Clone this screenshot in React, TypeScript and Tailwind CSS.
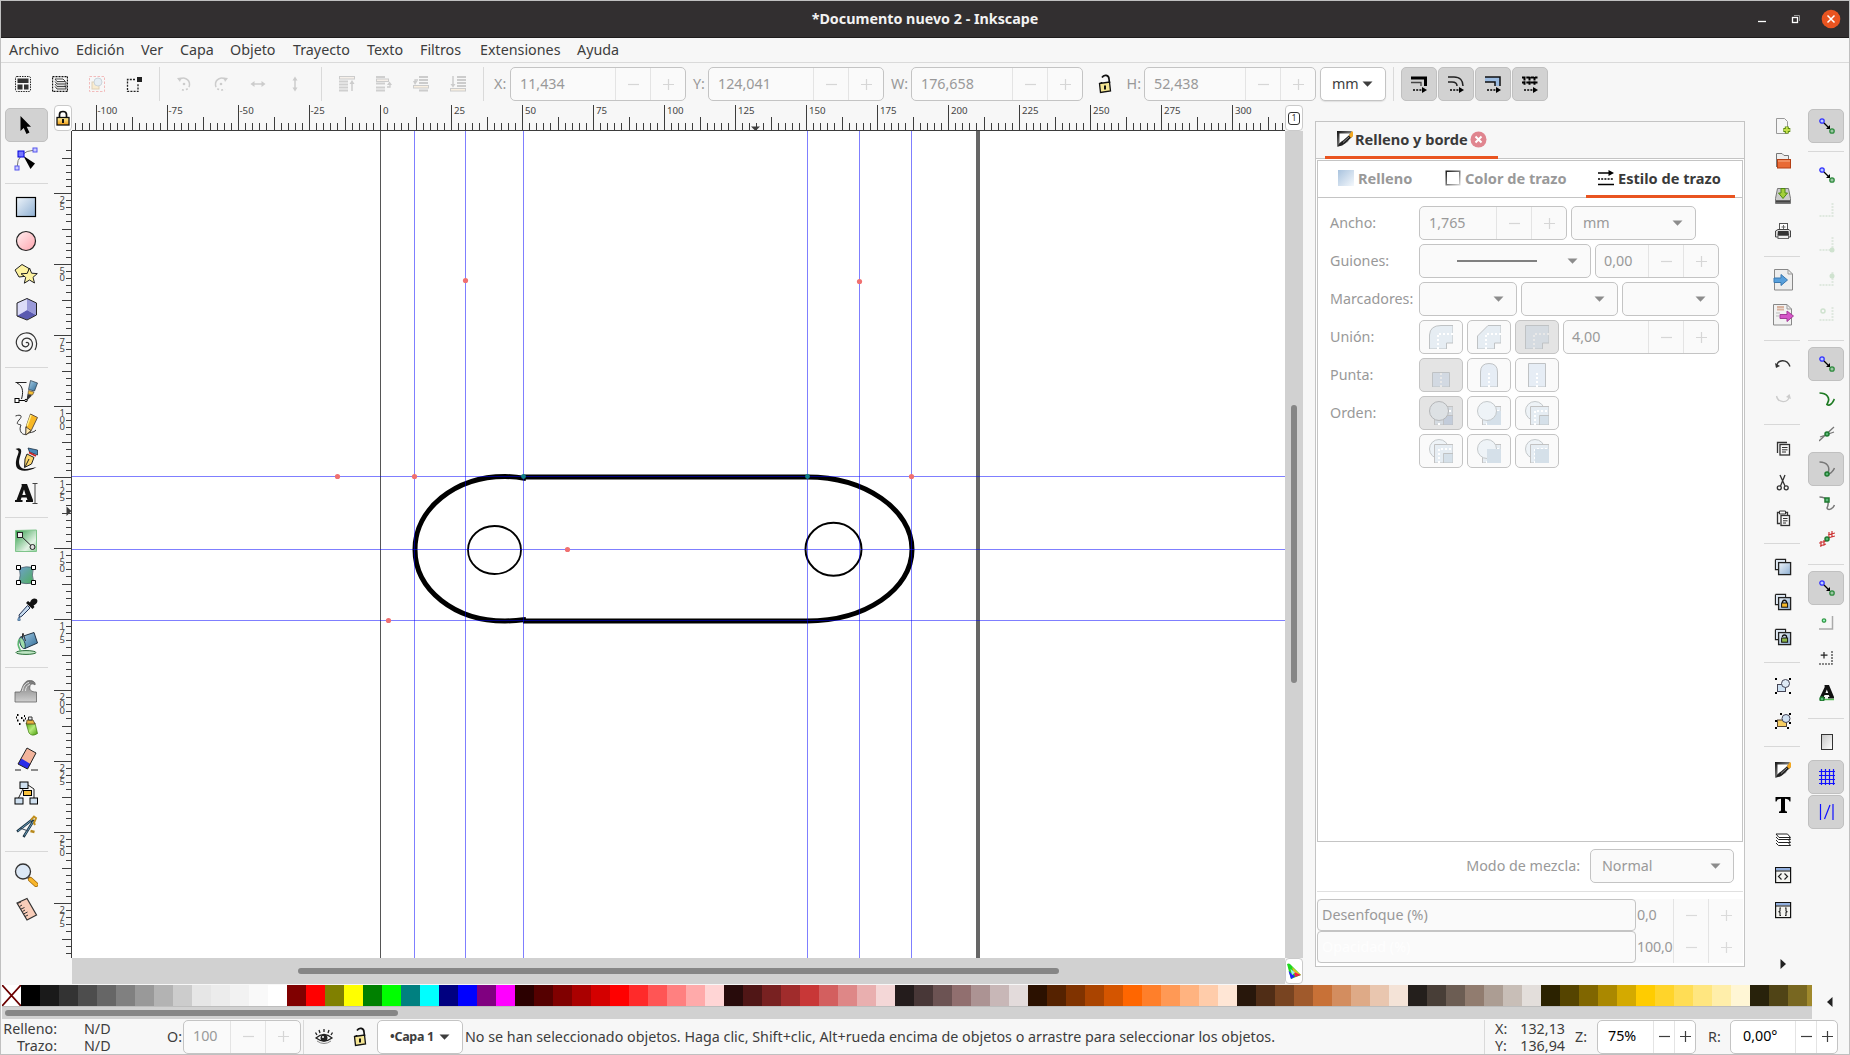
import type { ReactNode } from "react";

/* ---------- shared bits ---------- */

const Minus = ({ c = "#dadada" }: { c?: string }) => (
  <svg width="13" height="13" viewBox="0 0 13 13"><path d="M1 6.5H12" stroke={c} strokeWidth="1.2" /></svg>
);
const Plus = ({ c = "#dadada" }: { c?: string }) => (
  <svg width="13" height="13" viewBox="0 0 13 13"><path d="M1 6.5H12M6.5 1V12" stroke={c} strokeWidth="1.2" /></svg>
);
const Caret = ({ c = "#3d3d3d" }: { c?: string }) => (
  <svg width="11" height="6" viewBox="0 0 11 6"><path d="M0.5 0.5H10.5L5.5 5.8Z" fill={c} /></svg>
);

function Spin({ value, className, cell = "w-[35px]", active = false, text = "pl-[9px]" }: { value: string; className: string; cell?: string; active?: boolean; text?: string }) {
  const c = active ? "#3d3d3d" : "#d6d6d6";
  return (
    <div className={`flex h-[34px] shrink-0 items-stretch rounded-[5px] border border-[#c4c4c4] ${active ? "bg-white text-black" : "bg-[#fafafa] text-[#999]"} ${className}`}>
      <div className={`flex min-w-0 flex-1 items-center pb-px ${text}`}>{value}</div>
      <div className={`flex items-center justify-center border-l border-[#e4e4e4] ${cell}`}><Minus c={c} /></div>
      <div className={`flex items-center justify-center border-l border-[#e4e4e4] ${cell}`}><Plus c={c} /></div>
    </div>
  );
}

function Box({ className, children, on }: { className: string; children?: ReactNode; on?: boolean }) {
  return (
    <div className={`flex h-[34px] shrink-0 items-center rounded-[5px] border border-[#c4c4c4] ${on ? "bg-[#e4e4e4]" : "bg-[#fafafa]"} ${className}`}>{children}</div>
  );
}

const Svg = ({ s = 16, children }: { s?: number; children: ReactNode }) => (
  <svg width={s} height={s} viewBox={`0 0 ${s} ${s}`} fill="none" className="block shrink-0">{children}</svg>
);

const Gradients = () => (
  <svg width="0" height="0" className="absolute">
    <defs>
      <linearGradient id="blue" x1="0" y1="0" x2="1" y2="1"><stop offset="0" stopColor="#eef4fa" /><stop offset="1" stopColor="#8fb0d3" /></linearGradient>
      <linearGradient id="fillTab" x1="0" y1="0" x2="1" y2="1"><stop offset="0" stopColor="#a9c3de" /><stop offset="1" stopColor="#f4f8fc" /></linearGradient>
      <linearGradient id="pink" x1="0" y1="0" x2="1" y2="1"><stop offset="0" stopColor="#fff0f1" /><stop offset="1" stopColor="#ffa4ae" /></linearGradient>
      <linearGradient id="gold" x1="0" y1="0" x2="0" y2="1"><stop offset="0" stopColor="#fff3a0" /><stop offset="1" stopColor="#f09a10" /></linearGradient>
      <linearGradient id="green" x1="0" y1="0" x2="1" y2="1"><stop offset="0" stopColor="#2f9c47" /><stop offset="0.7" stopColor="#e3f3e5" /><stop offset="1" stopColor="#8fd09a" /></linearGradient>
      <linearGradient id="teal" x1="0" y1="0" x2="1" y2="1"><stop offset="0" stopColor="#6f9fd0" /><stop offset="1" stopColor="#4fae5c" /></linearGradient>
      <linearGradient id="lime" x1="0" y1="0" x2="1" y2="1"><stop offset="0" stopColor="#55a30c" /><stop offset="0.5" stopColor="#b6ec7c" /><stop offset="1" stopColor="#4a9c0a" /></linearGradient>
      <linearGradient id="gray" x1="0" y1="0" x2="0" y2="1"><stop offset="0" stopColor="#777" /><stop offset="1" stopColor="#d0d0d0" /></linearGradient>
      <linearGradient id="paper" x1="0" y1="0" x2="1" y2="1"><stop offset="0" stopColor="#c4c4c4" /><stop offset="1" stopColor="#fff" /></linearGradient>
      <linearGradient id="ink" x1="0" y1="0" x2="1" y2="1"><stop offset="0" stopColor="#111" /><stop offset="1" stopColor="#ddd" /></linearGradient>
      <linearGradient id="steel" x1="0" y1="0" x2="1" y2="1"><stop offset="0" stopColor="#a8d0e8" /><stop offset="1" stopColor="#2f6a96" /></linearGradient>
    </defs>
  </svg>
);

/* ---------- toolbox icons (24 px) ---------- */

const tools: (ReactNode | "sep")[] = [
  <path d="M6.500 3V18L9.700 15L12.500 21L15.500 19.600L12.700 13.800H17Z" fill="#000" />,
  <>
    <path d="M3 21Q3 4 21 3" stroke="#777" />
    <path d="M9.500 9L21 16.500L16.500 22Z" fill="#000" />
    <rect x="1" y="19" width="4" height="4" fill="#ccf" stroke="#55e" /><rect x="19" y="1" width="4" height="4" fill="#ccf" stroke="#55e" />
    <rect x="4" y="4" width="6" height="6" fill="#77f" stroke="#00d" />
  </>,
  "sep",
  <rect x="2.500" y="2.500" width="19" height="19" fill="url(#blue)" stroke="#000" strokeWidth="1.200" />,
  <circle cx="12" cy="12" r="9.500" fill="url(#pink)" stroke="#222" strokeWidth="1.200" />,
  <>
    <path d="M8 1.500L15 5.500L13.500 13L5 14L1 7Z" fill="#fdf2a0" stroke="#222" />
    <path d="M15.500 5L17.600 10.200L23.300 10.600L19 14.300L20.500 20L15.500 17L10.300 20.200L11.700 14.400L7 10.800L13.200 10.400Z" fill="#fdf2a0" stroke="#222" />
  </>,
  <>
    <path d="M3 6L13 1.500L22.500 6V18L13 23L3 19Z" fill="#b9b9ea" />
    <path d="M13 13L3 19L13 22.500L22 18Z" fill="#5a5ab0" /><path d="M13 1.500V13L22 18V6Z" fill="#9a9ad8" /><path d="M13 2L3.500 6V18.500L13 13Z" fill="#dcdcf8" />
    <path d="M3 6L13 1.500L22.500 6V18L13 23L3 19Z" stroke="#222" />
  </>,
  <path d="M12 12C13 10.500 15.500 12 14.500 14C13 17 8 16 8 12C8 7 14 5.500 17 9C20.500 13.500 17 20.500 11 20C3.500 19.500 .5 12 3.500 7C7 1 16 0 20.500 6C23.500 10.500 22.500 16 21 19" stroke="#333" strokeWidth="1.200" />,
  "sep",
  <>
    <path d="M1.500 3.500H12.500M3 4C10 7 9 15 7.500 20" stroke="#222" />
    <path d="M3 21.500H12" stroke="#000" /><rect x="1" y="19.500" width="4" height="4" fill="#fff" stroke="#000" /><circle cx="12" cy="21.500" r="1.200" fill="#fff" stroke="#000" />
    <path d="M16.500 1.500L23.500 4L20.500 12L14.500 10.500Z" fill="url(#steel)" stroke="#234" strokeWidth=".7" /><path d="M14.500 11.500L20 13L18.500 16L14 15Z" fill="#f5c037" stroke="#432" strokeWidth=".6" /><path d="M13.500 15L18 16.500L12.500 22Z" fill="#333" />
  </>,
  <>
    <path d="M1.500 3C7 1 9 3 5 7C1 12 5 11 7 12M7 12C4 18 9 23 12 21S20 20 22 17" stroke="#333" />
    <path d="M16.500 1L23.500 4.500L17 18L12 22V14Z" fill="#f8b824" stroke="#654" /><path d="M12 14L17 17.500L11.800 22Z" fill="#ffe8b0" stroke="#222" strokeWidth=".7" /><path d="M17 2L13 13" stroke="#fff08a" strokeWidth="1.500" />
  </>,
  <>
    <path d="M1.500 2C5 .5 8 1 7 6C5.500 12 4 15 6 19C8 23.500 15 22 22.500 20C15 25 5 25 2.500 20C.5 15 4 8 4.500 5.500C5 3 3 3 1.500 2Z" fill="#111" />
    <path d="M14 1L23.500 3V8L15.500 5Z" fill="#4b87b6" stroke="#123" strokeWidth=".7" /><path d="M15 5.500L22 9" stroke="#c22" strokeWidth="1.800" /><path d="M13 7L20 10.500L17.500 17L10.500 20.500L11 12Z" fill="#fbd66b" stroke="#222" /><path d="M11 20L15 12" stroke="#222" />
  </>,
  <>
    <path fillRule="evenodd" d="M7.500 3H13L19 19V21H12V19H13.500L12.600 16.500H7.500L6.700 19H8.500V21H1V19H2.500L7.800 5ZM8.300 14H11.700L10 8.500Z" fill="#111" />
    <path d="M18.500 2.500H23.500M18.500 22.500H23.500M21 2.500V22.500" stroke="#444" />
  </>,
  "sep",
  <>
    <path d="M1.500 1.500L22.500 1V22.500H1.500Z" fill="url(#green)" stroke="#7fc48b" /><path d="M6 6L18 17.500" stroke="#222" /><rect x="3.500" y="3.500" width="5" height="5" fill="#eee" stroke="#222" /><circle cx="18.500" cy="18" r="2.500" fill="#ddd" stroke="#222" />
  </>,
  <>
    <path d="M4.500 5.500Q12 2.500 19.500 4.500Q17 12 20 20Q12 21.500 4 19.500Q8 12 4.500 5.500Z" fill="url(#teal)" stroke="#456" strokeWidth=".7" />
    <path d="M2.500 2.500h4v4h-4zM17.500 2.500h4v4h-4zM2.500 17.500h4v4h-4zM17.500 17.500h4v4h-4z" fill="#fff" stroke="#000" />
  </>,
  <>
    <path d="M13.500 8.500L16 11L8 19L5.500 20.500L5 18Z" fill="#c7dbef" stroke="#235" /><path d="M5 20Q2.500 24 5 24Q7.500 24 5 20Z" fill="#7fb0de" stroke="#357" strokeWidth=".7" />
    <path d="M12 6L14 4L16 5.500C17 2 20 .5 22.500 2C25 4.500 22 7.500 19.500 8.500L20.500 10L18.500 12Z" fill="#111" />
  </>,
  <>
    <ellipse cx="12" cy="21.500" rx="10" ry="1.900" fill="#bfe6c4" stroke="#276b36" />
    <path d="M6.500 6L20 1.500L23.500 12L11 17.500Z" fill="url(#steel)" stroke="#234" /><path d="M6.500 6C4 8 7 19 11 17.500C12 13 10 8 6.500 6Z" fill="#9fdcab" stroke="#245" /><path d="M5.500 8C2.500 13 5 16 6.500 20" stroke="#5db872" strokeWidth="1.600" /><path d="M8.500 2.500V7M9 2L11.500 10" stroke="#333" />
  </>,
  "sep",
  <>
    <path d="M1 13H6C8 12 8 5 13 2C18 .5 22 3 21 6C19 4 16 5 16 7C15 11 17 13 22.500 13V23H1Z" fill="url(#gray)" stroke="#666" strokeWidth=".8" /><path d="M8.500 12C9 7 12 4 15 3.500M11.500 12C11.500 9 13 6 16 5.500" stroke="#e4e4e4" />
  </>,
  <>
    <path d="M3 2h1.500M7 5h1.500M3 7.500h1.500M10 3h1M5 11h1.500M2 4.500h1M9 7.500h1.500M11 5.500h1" stroke="#000" strokeWidth="1.800" />
    <path d="M12 10H21L23.500 20.500Q18 24 15 20Z" fill="url(#lime)" stroke="#3b7a0c" strokeWidth=".7" /><path d="M13 7L19 7L21 11H12.500Z" fill="#e9b23f" stroke="#542" strokeWidth=".8" /><path d="M14.500 4H18V7H14.500Z" fill="#eee" stroke="#333" />
  </>,
  <>
    <path d="M13 1L22 6L14 22L4 17Z" fill="#f2b49c" /><path d="M7.300 11.500L16.500 17L13.500 22L4 17Z" fill="#2b2be8" /><path d="M13 1L22 6L13.500 22L4 17Z" stroke="#222" /><path d="M1 23H7M17 23H24" stroke="#222" />
  </>,
  <>
    <path d="M9 8L4 18M14 4L20 8V17" stroke="#222" /><rect x="6" y="1" width="8" height="6.500" fill="#cfe0f0" stroke="#000" /><rect x="9.500" y="9.500" width="8" height="5" fill="#f8c13c" stroke="#000" /><rect x="1" y="17" width="8" height="6" fill="#cfe0f0" stroke="#000" /><rect x="16" y="17" width="7.500" height="6" fill="#cfe0f0" stroke="#000" />
  </>,
  <>
    <path d="M19 4L3 16.500M20 5L9.500 22" stroke="#1c3545" strokeWidth="2.400" /><path d="M19 4L4 16M19.500 6L10.500 20.500" stroke="#6a9dbb" /><path d="M6 13L14 16" stroke="#345" /><path d="M17 5L20 1.500L22 3L20 8L21 10" stroke="#c18f1c" strokeWidth="2" /><path d="M16.500 16L20.500 17" stroke="#b8891c" strokeWidth="2.400" />
  </>,
  "sep",
  <>
    <circle cx="9" cy="8.500" r="7.500" fill="#dce8f6" stroke="#333" strokeWidth="1.300" /><path d="M14 14L17 17" stroke="#555" strokeWidth="3" /><path d="M16.500 16.500L22 21.500" stroke="#a06a10" strokeWidth="5" strokeLinecap="round" /><path d="M16.500 16.500L22 21.500" stroke="#f8b62c" strokeWidth="3.500" strokeLinecap="round" />
  </>,
  <>
    <path d="M3 6L13 1.500L22.500 18L13 23Z" fill="#f9cdb9" stroke="#333" strokeWidth="1.200" /><path d="M3.500 6.500L7 5M5.500 9.500L8 8M7 12L10.500 10.500M8.500 14.500L11 13M9.500 17L13.500 15M11 19.500L14 18" stroke="#333" />
  </>,
];

/* ---------- command bar icons (16 px) ---------- */

const layered = <><path d="M.5 .5H10.500V4M.5 .5V10.500H3" stroke="#222" strokeWidth="1.300" /><path d="M1 1H10V3H3V10H1Z" fill="#dfe9f4" /><rect x="3.600" y="3.600" width="12" height="12" fill="url(#blue)" stroke="#222" strokeWidth="1.300" /></>;
const win = <><rect x=".6" y=".6" width="15" height="15" fill="#f4f4f0" stroke="#111" strokeWidth="1.200" /><path d="M1 2.300H15" stroke="#8faee0" strokeWidth="2.400" /><path d="M1 4H15" stroke="#111" /></>;
const corners = <path d="M0 0h2v2H0zM14 0h2v2h-2zM0 14h2v2H0zM14 14h2v2h-2z" fill="#000" />;
const fillStroke = <><path d="M0 0H15L11 11L0 16Z" fill="url(#ink)" /><path d="M2.500 2.500H13L9 9.500L2.500 13Z" fill="#fff" /><path d="M1 15.500C1.500 12 4 11 6 9.500L13.500 3L15.500 5.500L9.500 11C6.500 14.500 4 15 1 15.500Z" fill="#222" /><path d="M6 11.500L12 6" stroke="#aaa" strokeWidth=".8" /><path d="M12 4.500L14.500 .5H16V5L14 7Z" fill="#f3a820" /></>;

const commands: (ReactNode | "sep")[] = [
  <><path d="M1.500 .5H9.500L12.500 3.500V15.500H1.500Z" fill="#f6f6f6" stroke="#999" /><path d="M11.800 8.500V15.500M8.300 12H15.300" stroke="#5a8a10" strokeWidth="4" /><path d="M11.800 9V15M8.800 12H14.800" stroke="#c4e04a" strokeWidth="2" /></>,
  <><path d="M1.500 14V.5H7L9 2.500H13.500V9" fill="#eee" stroke="#777" /><rect x="2.500" y="6.500" width="13" height="8.500" fill="#e96a35" stroke="#b33f14" /><path d="M3 8H15" stroke="#f9b08a" /></>,
  <><path d="M2.500 .5H13.500L15.500 10.500V15.500H.5V10.500Z" fill="#ccc" stroke="#777" /><path d="M1 13.500H15" stroke="#444" strokeWidth="2.500" /><path d="M6 .5H10V5H12.500L8 10.500L3.500 5H6Z" fill="#a3cf3a" stroke="#4e8a12" /></>,
  <><rect x="4.500" y=".5" width="8" height="7" fill="#fff" stroke="#555" /><path d="M8.500 2V6M6.500 4H10.500" stroke="#666" /><path d="M.5 8L3 6.500H14L15.500 8V14H.5Z" fill="#ddd" stroke="#444" /><path d="M3 8H13.500L14 12H2.500Z" fill="#333" /><rect x="3" y="12.500" width="10.500" height="3" fill="#eee" stroke="#666" /></>,
  "sep",
  <><path d="M-.5 -2.500H13L17.500 2V18H-.5Z" fill="#eee" stroke="#888" /><path d="M13 -2.500V2H17.500" stroke="#999" /><path d="M-1 6H6V2.500L12.500 8L6 13.500V10.500H-1Z" fill="#58a0dc" stroke="#3a78b0" /></>,
  <><path d="M-1.500 -2.500H12L16.500 2V18H-1.500Z" fill="#f2f2f2" stroke="#888" /><path d="M12 -2.500V2H16.500" stroke="#999" /><path d="M2 0h7M2 2.500h7" stroke="#d9b3a0" strokeWidth="2" /><path d="M1 6h4M1 9h3" stroke="#bbb" /><path d="M5 7.500H12V4L18.500 9L12 14.500V11.500H5Z" fill="#d555c8" stroke="#a33a98" /></>,
  "sep",
  <><path d="M1.500 11C2 3 12 2.500 15 10.500" stroke="#333" strokeWidth="1.300" /><path d="M0 7L5 10L1 12Z" fill="#333" /></>,
  <><path d="M1.500 5C3 12 13 13 14.500 5" stroke="#ccc" strokeWidth="1.300" /><path d="M16 8L11 6L14.500 3Z" fill="#ccc" /></>,
  "sep",
  <><path d="M12 2.500H2.500V13" stroke="#333" strokeWidth="1.300" /><rect x="5" y="4.500" width="9.500" height="10.500" stroke="#333" strokeWidth="1.300" /><path d="M7 7.500H12.500M7 9.800H12.500M7 12H11" stroke="#333" /></>,
  <><path d="M5 0L10 11M10 0L5.500 11" stroke="#333" strokeWidth="1.300" /><circle cx="4.300" cy="12.800" r="2" stroke="#333" strokeWidth="1.300" /><circle cx="11.200" cy="12.800" r="2" stroke="#333" strokeWidth="1.300" /></>,
  <><path d="M4.500 2.500H2.500V13.500H5M10.500 2.500H12.500V5" stroke="#333" strokeWidth="1.300" /><path d="M4.500 1H10.500V4H4.500Z" stroke="#333" /><rect x="6" y="5.500" width="8.500" height="10" stroke="#333" strokeWidth="1.300" /><path d="M8 8.500H12.500M8 10.800H12.500M8 13H11" stroke="#333" /></>,
  "sep",
  layered,
  <>{layered}<path d="M7.500 9V7.500Q9.500 5 11.500 7.500V9" stroke="#111" strokeWidth="1.300" /><rect x="6.600" y="9" width="6" height="4.200" fill="#f5b82a" stroke="#111" /></>,
  <>{layered}<path d="M7.500 8V7Q9.500 5 11.500 7V9" stroke="#111" strokeWidth="1.300" /><rect x="6.600" y="9" width="6" height="4.200" fill="#8cb84a" stroke="#111" /></>,
  "sep",
  <><rect x="2.500" y="6.500" width="8" height="7" fill="#cfe2f3" stroke="#445" /><circle cx="10.500" cy="5.500" r="4" fill="#dfeaf5" stroke="#445" />{corners}</>,
  <><rect x="2.500" y="7" width="9" height="6.500" fill="#f8cf62" stroke="#543" /><circle cx="11" cy="5.500" r="4" fill="#cfe0f2" stroke="#445" /><path d="M5 0h2v2H5zM14 0h2v2h-2zM0 7h2v2H0zM14 9h2v2h-2zM0 14h2v2H0zM12 14h2v2h-2z" fill="#000" /></>,
  "sep",
  fillStroke,
  <path d="M0.500 0H15.500V4.500H14.500Q14 1.800 10 1.800V13Q10 14.500 12 14.500V16H4V14.500Q6 14.500 6 13V1.800Q2 1.800 1.500 4.500H.5Z" fill="#000" />,
  <><path d="M1 11L3.500 13.500H15.500L13 10M1 8L3.500 10.500H15.500L13 7M1 5L3.500 7.500H15.500L13 4" fill="#fff" stroke="#222" /><path d="M1 2H12.500L15.500 5.500H4Z" fill="#fff" stroke="#222" /></>,
  <>{win}<path d="M6.500 6.500L3.500 9.500L6.500 12.500M9.500 6.500L12.500 9.500L9.500 12.500" stroke="#222" strokeWidth="1.200" /></>,
  <>{win}<path d="M6 6H5V9L4 9.700L5 10.500V13.500H6M10 6H11V9L12 9.700L11 10.500V13.500H10" stroke="#222" strokeWidth="1.100" /></>,
];

/* ---------- snap bar icons (16 px) ---------- */

const snap = <><circle cx="3" cy="3" r="2.200" fill="#bcf" stroke="#33f" strokeWidth="1.300" /><circle cx="13" cy="13" r="2.200" fill="#9cc6a4" stroke="#2e8b3e" strokeWidth="1.300" /><path d="M5 5L9.500 9.500" stroke="#000" strokeWidth="1.300" /><path d="M11 7V11H7Z" fill="#000" /></>;
const node = (x: number, y: number) => <circle cx={x} cy={y} r="2" fill="#5cb87a" stroke="#1f7a30" strokeWidth="1.500" />;
const pale = "#dfe8df";
const boldA = "M5.500 0H10L15 12V13.500H9V12H10.500L9.800 10H5.500L4.800 12H6V13.500H1V12L5.700 2ZM6.500 8H9.200L7.800 4.500Z";

type SnapItem = "sep" | { icon: ReactNode; on?: boolean };

const snaps: SnapItem[] = [
  { icon: snap, on: true }, "sep",
  { icon: snap },
  { icon: <path d="M13.500 1V14H0" stroke={pale} strokeWidth="2" strokeDasharray="2 1" /> },
  { icon: <><path d="M13.500 0V13H0" stroke={pale} strokeWidth="2" strokeDasharray="2 1" /><circle cx="13" cy="13" r="2.500" fill="#cfe2cf" /></> },
  { icon: <><path d="M13.500 0V13H0" stroke={pale} strokeWidth="2" strokeDasharray="2 1" /><circle cx="13" cy="4" r="2.500" fill="#cfe2cf" /></> },
  { icon: <><path d="M13.500 0V13H0" stroke={pale} strokeWidth="2" strokeDasharray="2 1" /><circle cx="4" cy="4" r="2" stroke="#cfe2cf" strokeWidth="1.500" /></> }, "sep",
  { icon: snap, on: true },
  { icon: <path d="M.5 2C8 2 11 7 9 11C8 14 7 13.500 9 14C13 14.500 14 10 15.500 8" stroke="#1d7a22" strokeWidth="1.700" /> },
  { icon: <><path d="M0 15L15 1M1 11L15 6" stroke="#777" strokeWidth="1.300" />{node(8, 8)}</> },
  { icon: <><path d="M.5 1C8 1 12 6 8.500 13C12 13 14 10 15.500 7" stroke="#777" strokeWidth="1.500" />{node(8, 13)}</>, on: true },
  { icon: <><path d="M.5 1C8 1 11 6 8 12C9 15 14 13 15.500 9" stroke="#777" strokeWidth="1.500" /><rect x="6" y="2" width="4" height="4" fill="#5cb87a" stroke="#1f7a30" strokeWidth="1.500" /></> },
  { icon: <><path d="M2 10V16M5 9V15M0 12L7 10M1 15L7 13M10 1V7M13 0V6M9 4L16 2M9 7L16 5" stroke="#c33" strokeWidth="1.200" />{node(8, 8)}</> }, "sep",
  { icon: snap, on: true },
  { icon: <><path d="M13.500 1V14H0" stroke="#aaa" strokeWidth="1.500" /><circle cx="5" cy="5.500" r="1.700" fill="#9fc" stroke="#3a9a4a" strokeWidth="1.300" /></> },
  { icon: <><path d="M13 1V14H0" stroke="#666" strokeWidth="1.600" strokeDasharray="2 1" /><path d="M5 2V8.500M1.700 5.200H8.500" stroke="#222" strokeWidth="1.200" /></> },
  { icon: <><path fillRule="evenodd" d={boldA} fill="#111" /><path d="M3 14.500H15" stroke="#5b5" strokeWidth="1.500" />{node(3, 14)}</> }, "sep",
  { icon: <rect x="2.500" y=".5" width="11" height="15" fill="url(#paper)" stroke="#333" /> },
  { icon: <path d="M2.500 0V16M6.500 0V16M10.500 0V16M14.500 0V16M0 2.500H16M0 6.500H16M0 10.500H16M0 14.500H16" stroke="#11f" strokeWidth="1.200" />, on: true },
  { icon: <path d="M1.500 0V16M14 0V16M5.500 15L11 1" stroke="#11f" strokeWidth="1.200" />, on: true },
];

/* ---------- top toolbar ---------- */

const dotted = <rect x=".5" y=".5" width="15" height="15" rx="1.500" stroke="#222" strokeDasharray="1.500 1" />;
const barsAt = (y: number[]) => <path d={y.map((v) => `M0 ${v}H9`).join("")} stroke="#cfcfcf" strokeWidth="2" />;
const groups: { box: string; icons: ReactNode[] }[] = [
  {
    box: "pl-[14px] w-[158px]",
    icons: [
      <>{dotted}<path d="M2.500 2.500H13.500V7H2.500ZM2.500 8.500H7.500V13.500H2.500ZM9 8.500H13.500V13.500H9Z" fill="#333" /></>,
      <><rect x=".5" y=".5" width="15" height="15" stroke="#111" strokeWidth="1.300" strokeDasharray="2 1" /><path d="M3 10.500L5 13H14V11L12 10M3 8L5 10.500H14V8.500M3 5.500L5 8H14V6" fill="#ddd" stroke="#333" strokeWidth=".9" /><path d="M3 3H11L13.500 5.500H5Z" fill="#fff" stroke="#333" strokeWidth=".9" /></>,
      <><rect x=".5" y=".5" width="15" height="15" stroke="#f2bcbc" strokeDasharray="2.500 1.500" /><rect x="3" y="6" width="7" height="7" fill="#f9ecd0" stroke="#ddd0b8" /><circle cx="9" cy="6" r="4" fill="#e6eef4" stroke="#ccd4da" /></>,
      <><path d="M9 3.500H1.500V15.500H12V7" stroke="#222" strokeWidth="1.300" strokeDasharray="2 1.200" /><rect x="11" y="1" width="5" height="5" fill="#222" /></>,
    ],
  },
  {
    box: "pl-[16px] w-[161px]",
    icons: [
      <><path d="M3 4C7 0 14 3 13.500 9C13 14 7 15 4 13" stroke="#ccc" strokeWidth="1.500" strokeDasharray="17 2 2 2 2 2" /><path d="M1 2L5.500 1.500L4 6Z" fill="#ccc" /><circle cx="8" cy="8" r="1.300" fill="#ccc" /></>,
      <><path d="M13 4C9 0 2 3 2.500 9C3 14 9 15 12 13" stroke="#ccc" strokeWidth="1.500" strokeDasharray="17 2 2 2 2 2" /><path d="M15 2L10.500 1.500L12 6Z" fill="#ccc" /><circle cx="8" cy="8" r="1.300" fill="#ccc" /></>,
      <><path d="M3 8H13" stroke="#ccc" strokeWidth="1.500" /><path d="M.5 8L4.500 5V11ZM15.500 8L11.500 5V11Z" fill="#ccc" /></>,
      <><path d="M8 3V13" stroke="#ccc" strokeWidth="1.500" /><path d="M8 .5L5.500 4.500H10.500ZM8 15.500L5.500 11.500H10.500Z" fill="#ccc" /></>,
    ],
  },
  {
    box: "pl-[17px] w-[161px]",
    icons: [
      <><rect x=".5" y=".5" width="15" height="2.500" fill="#f6f0ea" stroke="#ccc" />{barsAt([5.500, 8.500, 11.500, 14.500])}<path d="M13 15V6" stroke="#ccc" strokeWidth="1.500" /><path d="M13 4L10.500 8H15.500Z" fill="#ccc" /></>,
      <>{barsAt([1, 7.500, 11.500, 14.500])}<rect x=".5" y="3" width="12" height="2.500" fill="#f6f0ea" stroke="#ccc" /><path d="M11 11H14V8" stroke="#ccc" strokeWidth="1.300" /><path d="M13.500 5.500L11 9H16Z" fill="#ccc" /></>,
      <><path d="M6 1H15M6 4H15M6 7H15M6 14.500H15" stroke="#ccc" strokeWidth="2" /><rect x=".5" y="9.500" width="15" height="2.500" fill="#f9efe0" stroke="#ccc" /><path d="M5 4H2V6" stroke="#ccc" strokeWidth="1.300" /><path d="M2 9L0 5H4.500Z" fill="#ccc" /></>,
      <><path d="M7 1H16M7 4H16M7 7H16M7 10H16" stroke="#ccc" strokeWidth="2" /><rect x=".5" y="12.500" width="15" height="2.500" fill="#f9efe0" stroke="#ccc" /><path d="M3 0V9" stroke="#ccc" strokeWidth="1.500" /><path d="M3 11.500L.5 8H5.500Z" fill="#ccc" /></>,
    ],
  },
];

const OpenLock = () => (
  <svg width="16" height="20" viewBox="0 0 16 20" fill="none">
    <path d="M4.500 9.500V8M5 3.500C7 0 12 1 12 5L12.500 9" stroke="#111" strokeWidth="1.700" />
    <path d="M2.500 9.500L12.500 8L13.500 17L3.500 18.500Z" fill="#f5e694" stroke="#111" strokeWidth="1.300" /><path d="M8 11.500V15.500" stroke="#111" strokeWidth="2" />
  </svg>
);

const affectArrow = <><path d="M2 14H12" stroke="#000" strokeWidth="1.500" strokeDasharray="2 1.200" /><path d="M11 11V17L16 14Z" fill="#000" /></>;
const affects = [
  <><path d="M0 2H14.500V10" stroke="#000" strokeWidth="3" /><path d="M0 6.500H10V10" stroke="#444" strokeWidth="1.300" /></>,
  <><path d="M0 1H6C12 1 15 5 15 10" stroke="#222" strokeWidth="1.500" /><path d="M0 6H4C8 6 9 8 9 10" stroke="#222" strokeWidth="1.500" /></>,
  <><path d="M0 1H15V10H10V6H0Z" fill="#9bbbe0" /><path d="M0 1H15V10M0 6H10V10" stroke="#111" strokeWidth="1.500" /></>,
  <path d="M0 1.500H15.500M0 6.500H15.500M2.500 1V9M7.500 1V9M12.500 1V9" stroke="#000" strokeWidth="2" strokeDasharray="3.500 .8" />,
];

const VSep = ({ className = "" }: { className?: string }) => <div className={`h-[34px] w-px shrink-0 bg-[#dadada] ${className}`} />;

function Toolbar() {
  return (
    <div className="flex h-[42px] items-center">
      {groups.map((g, i) => (
        <div key={i} className="flex items-center">
          <div className={`flex gap-[21px] ${g.box}`}>{g.icons.map((ic, k) => <Svg key={k}>{ic}</Svg>)}</div>
          <VSep />
        </div>
      ))}
      <div className="flex items-center text-[#999]">
        <span className="w-[26px] pb-px pl-[10px]">X:</span><Spin value="11,434" className="w-[176px]" />
        <span className="w-[22px] pb-px pl-[7px]">Y:</span><Spin value="124,041" className="w-[176px]" />
        <span className="w-[27px] pb-px pl-[7px]">W:</span><Spin value="176,658" className="w-[172px]" />
        <div className="flex w-[61px] items-center justify-between pr-[3px] pl-[14px]"><OpenLock /><span className="pb-px">H:</span></div>
        <Spin value="52,438" className="w-[172px]" />
      </div>
      <div className="ml-[4px] flex h-[34px] w-[66px] items-center justify-between rounded-[5px] border border-[#c4c4c4] bg-white pr-[12px] pl-[11px] text-[#3d3d3d] shadow-[0_1px_1px_#e0e0e0]"><span className="pb-px">mm</span><Caret /></div>
      <VSep className="ml-[7px]" />
      <div className="ml-[7px] flex gap-px">
        {affects.map((a, i) => (
          <div key={i} className="flex h-[34px] w-[36px] items-center justify-center rounded-[5px] border border-[#c0c0c0] bg-[#d2d2d2]">
            <Svg s={17}>{a}{affectArrow}</Svg>
          </div>
        ))}
      </div>
    </div>
  );
}

/* ---------- canvas ---------- */

const S = 2.84;
const hTicks = Array.from({ length: 175 }, (_, i) => i - 43);
const vTicks = Array.from({ length: 114 }, (_, i) => i + 4);

const RulerH = () => (
  <svg width="1213" height="26" viewBox="72 105 1213 26" className="block font-['Noto_Sans']">
    {hTicks.map((i) => {
      const x = Math.round(380 + i * 2.5 * S) + 0.5;
      const y = i % 10 === 0 ? 105 : i % 5 === 0 ? 117 : 123;
      return <path key={i} d={`M${x} ${y}V130`} stroke="#3d3d3d" />;
    })}
    {Array.from({ length: 17 }, (_, i) => i * 25 - 100).map((v) => (
      <text key={v} x={(v < 0 ? 381.5 : 383) + v * S} y="114" fontSize="9.700" fill="#444">{v}</text>
    ))}
    <path d="M751 126.500H760L755.500 131Z" fill="#3d3d3d" />
    <path d="M72 130.500H1285" stroke="#3d3d3d" />
  </svg>
);

const RulerV = () => (
  <svg width="18" height="827" viewBox="54 131 18 827" className="block font-['Noto_Sans']">
    {vTicks.map((i) => {
      const y = Math.round(122 + i * 2.5 * S) + 0.5;
      const x = i % 10 === 0 ? 54 : i % 5 === 0 ? 62 : 66;
      return <path key={i} d={`M${x} ${y}H71`} stroke="#3d3d3d" />;
    })}
    {Array.from({ length: 11 }, (_, i) => (i + 1) * 25).map((v) =>
      String(v).split("").map((d, k) => (
        <text key={`${v}-${k}`} x="59.500" y={122 + v * S + 9.5 + k * 7} fontSize="9.500" fill="#444">{d}</text>
      ))
    )}
    <path d="M66.500 506.500V516L71.500 511Z" fill="#3d3d3d" />
    <path d="M71.500 131V958" stroke="#3d3d3d" />
  </svg>
);

const guidesX = [414.5, 465.5, 523.5, 807.5, 859.5, 911.5];
const guidesY = [476.5, 549.5, 620.5];
const anchors = [[465.5, 280.5], [859.5, 281.5], [337.5, 476.5], [414.5, 476.5], [911.5, 476.5], [567.5, 549.5], [388.5, 620.5]];

const Canvas = () => (
  <svg width="1213" height="827" viewBox="72 131 1213 827" fill="none" className="block bg-white">
    <path d="M380.500 131V958" stroke="#555" />
    <path d="M978 131V958" stroke="#666" strokeWidth="4" />
    <g stroke="#000" strokeWidth="5">
      <path d="M526 478.500C517 477 511 476.500 505 476.500C455 476.500 415 509 415 549.500C415 590 455 621 505 621C511 621 517 620.500 526 619.500" />
      <path d="M523 477H807C865 477 912 509.500 912 549.500S865 621 807 621H523" />
    </g>
    <ellipse cx="494.500" cy="550" rx="26.500" ry="24" stroke="#000" strokeWidth="1.800" />
    <ellipse cx="833.500" cy="549.200" rx="28" ry="26.500" stroke="#000" strokeWidth="2" />
    <g stroke="#0000ff" strokeOpacity=".5">
      {guidesX.map((x) => <path key={x} d={`M${x} 131V958`} />)}
      {guidesY.map((y) => <path key={y} d={`M72 ${y}H1285`} />)}
    </g>
    {anchors.map(([x, y]) => <circle key={`${x}${y}`} cx={x} cy={y} r="2.600" fill="#f07070" />)}
    <circle cx="523.500" cy="476.500" r="2.400" fill="#0f7f8a" /><circle cx="807.500" cy="476.500" r="2.400" fill="#0f7f8a" />
  </svg>
);

const Corner = ({ children }: { children: ReactNode }) => (
  <div className="flex h-[26px] w-[18px] shrink-0 items-center justify-center rounded-[4px] border border-[#cacaca] bg-white">{children}</div>
);

function CanvasArea() {
  return (
    <div className="w-[1249px] shrink-0">
      <div className="flex h-[26px]">
        <Corner>
          <svg width="14" height="16" viewBox="0 0 14 16" fill="none"><path d="M3.500 8V4.500Q3.500 1.500 7 1.500T10.500 4.500V8" stroke="#111" strokeWidth="1.700" /><rect x="1" y="7.500" width="12" height="7.500" fill="url(#gold)" stroke="#111" strokeWidth="1.300" /><path d="M7 9V13" stroke="#111" strokeWidth="2" /></svg>
        </Corner>
        <RulerH />
        <Corner><div className="flex h-[13px] w-[12px] items-center justify-center rounded-[3px] border border-[#333] text-[9px] text-[#333]">1</div></Corner>
      </div>
      <div className="flex h-[827px]">
        <RulerV />
        <Canvas />
        <div className="w-[18px] bg-[#d1d1d1] pt-[274px] pl-[6px]"><div className="h-[278px] w-[6px] rounded-full bg-[#868686]" /></div>
      </div>
      <div className="flex h-[27px] pl-[18px]">
        <div className="h-[26px] w-[1213px] bg-[#d1d1d1] pt-[10px] pl-[226px]"><div className="h-[6px] w-[761px] rounded-full bg-[#868686]" /></div>
        <Corner>
          <svg width="14" height="17" viewBox="0 0 14 17"><path d="M0 1Q2 0 3 1L14 12L4 16Z" fill="#1fd81f" /><path d="M5 4L14 12L7 11Z" fill="#e8c020" /><path d="M7 9L14 12L8 14Z" fill="#f0204a" /><path d="M1.500 8L8 13.500L4 16Z" fill="#2222ff" /><path d="M3.500 6L8 9.500L5 12Z" fill="#a0f0e8" /></svg>
        </Corner>
      </div>
    </div>
  );
}

/* ---------- fill & stroke dock ---------- */

const Row = ({ label, children }: { label: string; children: ReactNode }) => (
  <div className="flex h-[38px] items-start">
    <span className="flex h-[34px] w-[89px] shrink-0 items-center pb-px whitespace-nowrap">{label}</span>
    <div className="flex gap-[4px]">{children}</div>
  </div>
);

const joins = ["M.5 24V10Q1 .5 12 .5H24V18H17.500V24Z", "M.5 24V11L11 .5H24V18H17.500V24Z", "M.5 24V.5H24V18H17.500V24Z"];
const caps = ["M3.500 24V9.500H20.500V24Z", "M3.500 24V9Q3.500 .5 12 .5T20.500 9V24Z", "M3.500 24V.5H20.500V24Z"];

const Ico = ({ children, on }: { children: ReactNode; on?: boolean }) => (
  <Box on={on} className="w-[44px] justify-center"><svg width="24" height="24" viewBox="0 0 24 24" fill="none">{children}</svg></Box>
);

function Order({ v, on }: { v: number; on?: boolean }) {
  const circle = <circle cx="10" cy="10" r="9.500" fill={on ? "#dde1e4" : "#eef3f7"} stroke={on ? "#b4b6b8" : "#c4c8ca"} />;
  const stroke = <><path d="M5.500 24V5.500H24V14.500H15V24Z" fill={on ? "#d5dbe1" : "#e6edf3"} stroke="#c2c2c2" /><path d="M10 24V10H24" stroke="#fff" strokeWidth="2" strokeDasharray="2 2" /></>;
  const fill = <path d="M10 10H24V24H10Z" fill="#d5e0e9" />;
  const inner = <path d="M14.500 24V14.500H24V24Z" fill={on ? "#c3ccda" : "#d5e0e9"} stroke="#bbb" strokeWidth=".7" />;
  const order: ReactNode[][] = [[stroke, inner, circle], [stroke, fill, circle], [circle, stroke, inner], [circle, stroke, inner], [stroke, circle, fill], [circle, stroke, fill]];
  return <Ico on={on}>{order[v].map((p, i) => <g key={i}>{p}</g>)}</Ico>;
}

function Dock() {
  const tab = "flex items-center pb-[2px] text-[14.600px] font-bold whitespace-nowrap";
  return (
    <div className="mt-[16px] ml-[12px] flex h-[846px] w-[430px] shrink-0 flex-col border border-[#c4c4c4] bg-white text-[#999]">
      <div className="flex h-[37px] shrink-0 border-b border-[#c4c4c4] bg-[#f7f7f7] pl-[9px]">
        <div className="flex h-[37px] w-[173px] items-center border-b-[3px] border-[#e95420] pl-[12px] text-[14.600px] font-bold text-[#3a3a3a]">
          <Svg>{fillStroke}</Svg>
          <span className="ml-[2px] w-[113px] whitespace-nowrap">Relleno y borde</span>
          <svg width="17" height="17" viewBox="0 0 17 17" className="ml-[2px]"><circle cx="8.500" cy="8.500" r="8" fill="#e0858f" /><path d="M5.500 5.500L11.500 11.500M11.500 5.500L5.500 11.500" stroke="#fff" strokeWidth="2" /></svg>
        </div>
      </div>
      <div className="mx-px mt-px flex h-[682px] shrink-0 flex-col border border-[#c4c4c4]">
        <div className="flex h-[37px] shrink-0 border-b border-[#c4c4c4]">
          <div className={`${tab} w-[107px] pl-[20px]`}><Svg><rect width="16" height="16" fill="url(#fillTab)" /></Svg><span className="ml-[4px]">Relleno</span></div>
          <div className={`${tab} w-[161px] pl-[20px]`}><Svg><rect x=".5" y=".5" width="15" height="15" fill="url(#ink)" /><rect x="2" y="2" width="12" height="12" fill="#fff" /></Svg><span className="ml-[4px]">Color de trazo</span></div>
          <div className="flex h-[37px] w-[149px] items-center border-b-[3px] border-[#e95420] pl-[12px] text-[14.600px] font-bold whitespace-nowrap text-[#3a3a3a]">
            <Svg><path d="M0 3H12M0 14.500H16" stroke="#000" strokeWidth="1.500" /><path d="M10.500 0L16 3L10.500 6Z" fill="#000" /><path d="M0 9H16" stroke="#000" strokeWidth="1.500" strokeDasharray="2 1.200" /></Svg>
            <span className="ml-[4px]">Estilo de trazo</span>
          </div>
        </div>
        <div className="pt-[8px] pl-[12px]">
          <Row label="Ancho:"><Spin value="1,765" className="w-[148px]" /><Box className="w-[125px] justify-between pr-[12px] pl-[11px]">mm<Caret c="#8c8c8c" /></Box></Row>
          <Row label="Guiones:"><Box className="w-[172px] justify-between pr-[12px] pl-[37px]"><span className="h-[2px] w-[80px] bg-[#808080]" /><Caret c="#8c8c8c" /></Box><Spin value="0,00" className="w-[124px]" text="pl-[8px]" /></Row>
          <Row label="Marcadores:">
            <Box className="w-[98px] justify-end pr-[12px]"><Caret c="#8c8c8c" /></Box>
            <Box className="w-[97px] justify-end pr-[12px]"><Caret c="#8c8c8c" /></Box>
            <Box className="w-[97px] justify-end pr-[12px]"><Caret c="#8c8c8c" /></Box>
          </Row>
          <Row label="Unión:">
            {joins.map((d, i) => <Ico key={i} on={i === 2}><path d={d} fill={i === 2 ? "#d5dbe1" : "#e6edf3"} stroke="#bfc2c4" /><path d="M9 24V9H24" stroke={i === 2 ? "#e8e8e8" : "#fff"} strokeWidth="2" strokeDasharray="2 2" /></Ico>)}
            <Spin value="4,00" className="w-[156px]" text="pl-[8px]" />
          </Row>
          <Row label="Punta:">
            {caps.map((d, i) => <Ico key={i} on={i === 0}><path d={d} fill={i === 0 ? "#d2d9e2" : "#e6edf5"} stroke="#bfc2c4" /><path d="M12 24V10" stroke={i === 0 ? "#e8e8e8" : "#fff"} strokeWidth="2" strokeDasharray="2 2" /></Ico>)}
          </Row>
          <Row label="Orden:">{[0, 1, 2].map((v) => <Order key={v} v={v} on={v === 0} />)}</Row>
          <Row label="">{[3, 4, 5].map((v) => <Order key={v} v={v} />)}</Row>
        </div>
      </div>
      <div className="mx-px flex h-[50px] shrink-0 items-center justify-end gap-[10px] border-b border-[#e0e0e0] pr-[9px] pb-[2px]">
        <span>Modo de mezcla:</span>
        <Box className="w-[144px] justify-between pr-[12px] pl-[11px]">Normal<Caret c="#8c8c8c" /></Box>
      </div>
      <div className="mx-px mt-[7px]">
        {[["Desenfoque (%)", "0,0"], ["Opacidad (%)", "100,0"]].map(([l, v], i) => (
          <div key={l} className="flex h-[32px] bg-[#fafafa]">
            <div className={`flex w-[319px] items-center rounded-[4px] border border-[#c4c4c4] pl-[4px] ${i ? "text-[#fefefe]" : ""}`}>{l}</div>
            <div className="flex w-[37px] items-center pl-[1px] tracking-[-0.2px]">{v}</div>
            <div className="flex w-[35px] items-center justify-center border-l border-[#e4e4e4]"><Minus /></div>
            <div className="flex w-[35px] items-center justify-center border-l border-[#e4e4e4]"><Plus /></div>
          </div>
        ))}
      </div>
    </div>
  );
}

/* ---------- palette ---------- */

const palette = (
  "000000 1a1a1a 333333 4d4d4d 666666 808080 999999 b3b3b3 cccccc e6e6e6 ececec f2f2f2 f9f9f9 ffffff 800000 ff0000 808000 ffff00 008000 00ff00 008080 00ffff 000080 0000ff 800080 ff00ff " +
  "2b0000 550000 800000 aa0000 d40000 ff0000 ff2a2a ff5555 ff8080 ffaaaa ffd5d5 280b0b 501616 782121 a02c2c c83737 d35f5f de8787 e9afaf f4d7d7 241c1c 483737 6c5353 916f6f ac9393 c8b7b7 e3dbdb " +
  "2b1100 552200 803300 aa4400 d45500 ff6600 ff7f2a ff9955 ffb380 ffccaa ffe6d5 28170b 502d16 784421 a05a2c c87137 d38d5f deaa87 e9c6af f4e3d7 241f1c 483e37 6c5d53 917c6f ac9d93 c8beb7 e3dedb " +
  "2b2200 554400 806600 aa8800 d4aa00 ffcc00 ffd42a ffdd55 ffe680 ffeeaa fff6d5 28220b 504416 786721 a0892c"
).split(" ");

const Palette = () => (
  <div className="flex h-[34px] shrink-0 items-center">
    <div className="ml-px w-[1810px] shrink-0">
      <div className="flex h-[21px] overflow-hidden">
        <svg width="19" height="21" viewBox="0 0 19 21" className="shrink-0 bg-white"><path d="M0 0L19 21M19 0L0 21" stroke="#6b0000" strokeWidth="1.800" /></svg>
        {palette.map((c, i) => <div key={i} className="h-[21px] w-[19px] shrink-0" style={{ backgroundColor: `#${c}` }} />)}
      </div>
      <div className="h-[13px] border-t border-[#bdbdbd] bg-[#d1d1d1] pt-[3px] pl-[3px]"><div className="h-[6px] w-[393px] rounded-full bg-[#868686]" /></div>
    </div>
    <svg width="6" height="10" viewBox="0 0 6 10" className="ml-[15px]"><path d="M5.500 0V10L0 5Z" fill="#222" /></svg>
  </div>
);

/* ---------- status bar ---------- */

const Status = () => (
  <div className="flex h-[35px] shrink-0 items-center text-[#3d3d3d]">
    <div className="w-[56px] shrink-0 text-right leading-[17px]"><div>Relleno:</div><div>Trazo:</div></div>
    <div className="ml-[27px] w-[83px] shrink-0 leading-[17px]"><div>N/D</div><div>N/D</div></div>
    <span className="w-[16px] shrink-0">O:</span>
    <Spin value="100" className="w-[118px]" />
    <VSep className="ml-[2px]" />
    <svg width="18" height="18" viewBox="0 0 18 18" fill="none" className="ml-[11px] shrink-0">
      <path d="M1 10Q9 3 17 10Q9 16 1 10Z" fill="#fff" stroke="#222" strokeWidth="1.300" /><circle cx="9" cy="10" r="3.500" fill="#222" /><circle cx="8" cy="9" r="1" fill="#fff" /><path d="M2 7L.5 4.500M5 5L4 2M9 4V1M13 5L14 2M16 7L17.500 4.500" stroke="#222" strokeWidth="1.300" /><path d="M2 13Q9 18 16 13" stroke="#888" />
    </svg>
    <div className="ml-[19px] shrink-0"><OpenLock /></div>
    <div className="ml-[9px] flex h-[34px] w-[86px] shrink-0 items-center justify-between rounded-[5px] border border-[#c4c4c4] bg-white pr-[12px] pl-[12px] text-[12.500px] font-bold tracking-[-0.300px]"><span className="whitespace-nowrap">•Capa 1</span><Caret /></div>
    <span className="ml-[2px] w-[1019px] shrink-0 whitespace-nowrap">No se han seleccionado objetos. Haga clic, Shift+clic, Alt+rueda encima de objetos o arrastre para seleccionar los objetos.</span>
    <VSep />
    <div className="ml-[10px] w-[16px] shrink-0 leading-[17px]"><div>X:</div><div>Y:</div></div>
    <div className="w-[54px] shrink-0 text-right leading-[17px]"><div>132,13</div><div>136,94</div></div>
    <span className="ml-[10px] w-[22px] shrink-0">Z:</span>
    <Spin value="75%" className="w-[99px]" cell="w-[21px]" active text="pl-[10px]" />
    <span className="ml-[12px] w-[22px] shrink-0">R:</span>
    <Spin value="0,00°" className="w-[108px]" cell="w-[21px]" active text="pl-[12px]" />
  </div>
);

const menu: [string, string][] = [
  ["Archivo", "w-[67px]"], ["Edición", "w-[65px]"], ["Ver", "w-[39px]"], ["Capa", "w-[50px]"], ["Objeto", "w-[63px]"],
  ["Trayecto", "w-[74px]"], ["Texto", "w-[53px]"], ["Filtros", "w-[60px]"], ["Extensiones", "w-[97px]"], ["Ayuda", "w-[50px]"],
];

export default function App() {
  return (
    <div className="relative flex h-[1055px] w-[1850px] flex-col overflow-hidden border border-[#c0c0c0] bg-[#f7f7f7] font-['Noto_Sans',sans-serif] text-[14.300px] leading-[20px] text-[#3d3d3d]">
      <Gradients />
      <div className="grid h-[37px] shrink-0 grid-cols-[1fr_auto_1fr] items-center border-b border-[#1e1c1c] bg-[#322f30] font-bold text-[#f2f2f2]">
        <span />
        <span>*Documento nuevo 2 - Inkscape</span>
        <div className="flex items-center justify-end pr-[8px]">
          <svg width="10" height="10" viewBox="0 0 10 10"><path d="M1 7.500H9" stroke="#fff" strokeWidth="1.300" /></svg>
          <svg width="10" height="10" viewBox="0 0 10 10" fill="none" className="ml-[24px]"><path d="M3 1.500H8.500V7" stroke="#999" /><rect x="1.500" y="3.500" width="5" height="5" stroke="#fff" strokeWidth="1.300" /></svg>
          <svg width="20" height="20" viewBox="0 0 20 20" className="ml-[20px]"><circle cx="10" cy="10" r="9.300" fill="#e95420" /><path d="M6.500 6.500L13.500 13.500M13.500 6.500L6.500 13.500" stroke="#fff" strokeWidth="1.500" /></svg>
        </div>
      </div>
      <div className="flex h-[25px] shrink-0 items-center border-b border-[#dadada] pl-[8px]">
        {menu.map(([m, w]) => <span key={m} className={w}>{m}</span>)}
      </div>
      <Toolbar />
      <div className="flex h-[880px] shrink-0">
        <div className="w-[53px] shrink-0 pt-[3px] pl-[4px]">
          {tools.map((t, i) =>
            t === "sep" ? (
              <div key={i} className="flex h-[14px] items-center"><div className="h-px w-[43px] bg-[#d8d8d8]" /></div>
            ) : (
              <div key={i} className={`flex h-[34px] w-[43px] items-center justify-center pr-[2px] ${i === 0 ? "rounded-[5px] border border-[#c0c0c0] bg-[#d2d2d2]" : ""}`}><Svg s={24}>{t}</Svg></div>
            )
          )}
        </div>
        <CanvasArea />
        <Dock />
        <div className="ml-[19px] w-[36px] shrink-0 pt-[4px]">
          {commands.map((c, i) =>
            c === "sep" ? (
              <div key={i} className="flex h-[14px] items-center"><div className="h-px w-full bg-[#d8d8d8]" /></div>
            ) : (
              <div key={i} className="flex h-[35px] items-center justify-center pb-px pl-[2px] [&_svg]:overflow-visible"><Svg>{c}</Svg></div>
            )
          )}
          <div className="mt-[31px] flex justify-center pl-[2px]"><svg width="6" height="10" viewBox="0 0 6 10"><path d="M0.500 0V10L6 5Z" fill="#222" /></svg></div>
        </div>
        <div className="ml-[8px] w-[36px] shrink-0 pt-[4px]">
          {snaps.map((s, i) =>
            s === "sep" ? (
              <div key={i} className="flex h-[14px] items-center"><div className="h-px w-full bg-[#d8d8d8]" /></div>
            ) : (
              <div key={i} className={`mb-px flex h-[34px] items-center justify-center rounded-[5px] border pl-px ${s.on ? "border-[#c0c0c0] bg-[#d2d2d2]" : "border-transparent"}`}><Svg>{s.icon}</Svg></div>
            )
          )}
        </div>
      </div>
      <Palette />
      <Status />
    </div>
  );
}
